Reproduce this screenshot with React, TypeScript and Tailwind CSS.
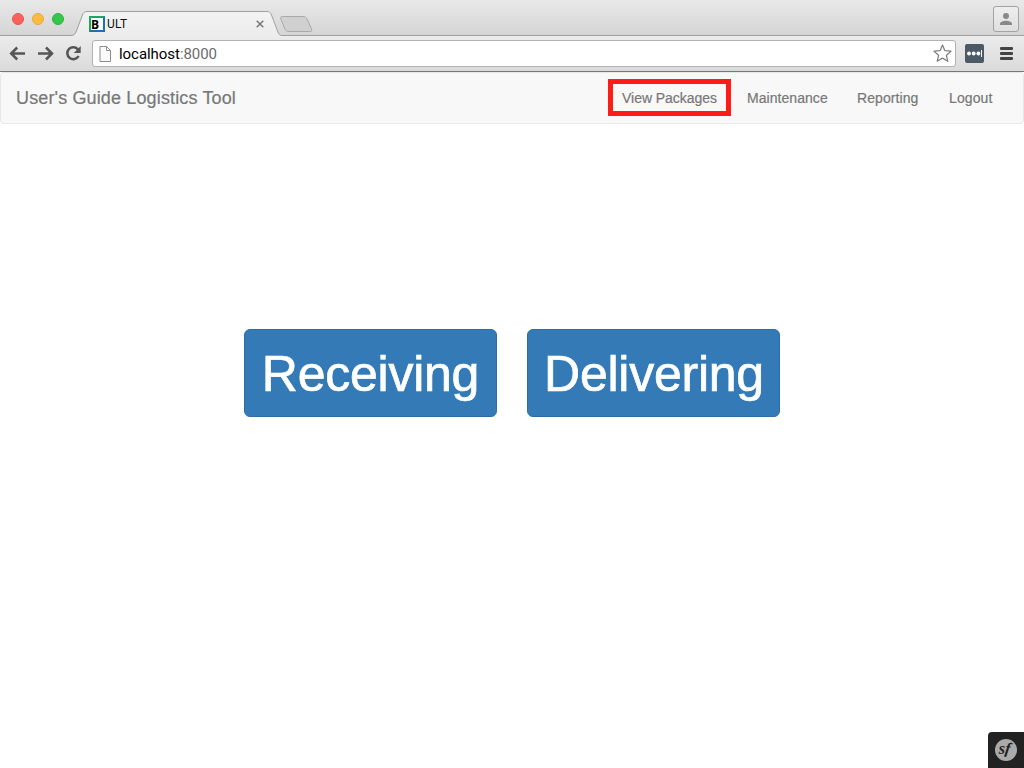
import React from "react";

function TabStrip() {
  return (
    <div className="relative flex h-9 items-start bg-gradient-to-b from-[#e9e9e9] to-[#d4d4d4]">
      <svg className="absolute inset-0" width="1024" height="37" viewBox="0 0 1024 37" fill="none">
        <defs>
          <linearGradient id="tab" x1="0" y1="11" x2="0" y2="37" gradientUnits="userSpaceOnUse">
            <stop stopColor="#f3f3f3" />
            <stop offset="1" stopColor="#ececec" />
          </linearGradient>
        </defs>
        <path d="M0 35.5H71C74 35.5 75 34 76 32L82.500 15C83.500 12.500 84.500 11.500 87 11.500H267C269.500 11.500 270.500 12.500 271.500 15L277.500 31C278.800 34 279.500 35.500 282 35.500H1024V37H0Z" fill="url(#tab)" />
        <path d="M0 35.5H71C74 35.5 75 34 76 32L82.500 15C83.500 12.500 84.500 11.500 87 11.500H267C269.500 11.500 270.500 12.500 271.500 15L277.500 31C278.800 34 279.500 35.500 282 35.500H1024" stroke="#a0a0a0" />
        <path d="M282.500 16.500H303C305 16.500 306.500 17.500 307.300 19.500L311.500 29C312.300 31 311.500 31.500 309.500 31.500H289C286.500 31.500 285.500 30.500 284.500 28L280.800 19C280 17.200 281 16.500 282.500 16.500Z" fill="#d0d0d0" stroke="#a9a9a9" />
      </svg>
      <div className="relative flex w-full items-start">
        <div className="mt-[13px] ml-3 flex gap-2">
          <span className="h-3 w-3 rounded-full border border-[#e7534f] bg-[#fc605c]" />
          <span className="h-3 w-3 rounded-full border border-[#e8a936] bg-[#fdbc40]" />
          <span className="h-3 w-3 rounded-full border border-[#29b43d] bg-[#34c84a]" />
        </div>
        <div className="mt-4 ml-[25px] flex h-4 w-4 items-end border-2 border-t-[#20a664] border-r-[#1972b9] border-b-[#1972b9] border-l-[#20a664] bg-white">
          <span className="font-['Open_Sans',sans-serif] text-[12px] leading-[11px] font-bold text-black">B</span>
        </div>
        <span className="mt-4 ml-[2px] w-[150px] font-['Roboto',sans-serif] text-[12px] leading-4 tracking-[0.2px] text-[#111]">ULT</span>
        <svg className="mt-5 -ml-[1px]" width="8" height="8" viewBox="0 0 8 8" stroke="#777" strokeWidth="1.500">
          <path d="M.7 .7L7.300 7.300M7.300 .7L.7 7.300" />
        </svg>
        <div className="mt-[6px] mr-[5px] ml-auto flex h-[26px] w-[26px] items-center justify-center rounded-[3px] border border-[#a3a3a3] bg-gradient-to-b from-[#eee] to-[#dfdfdf]">
          <svg width="14" height="14" viewBox="0 0 14 14" fill="#888">
            <circle cx="7" cy="4" r="3" />
            <path d="M1 13V11.800C1 9.800 4.500 8.800 7 8.800S13 9.800 13 11.800V13Z" />
          </svg>
        </div>
      </div>
    </div>
  );
}

function Toolbar() {
  return (
    <div className="relative flex h-9 items-center border-b border-[#777] bg-gradient-to-b from-[#ececec] to-[#dadada]">
      <svg className="ml-[9px] shrink-0" width="76" height="20" viewBox="9 44 76 20" fill="none" stroke="#555" strokeWidth="2.500">
        <path d="M25 53.500H12M17.200 47.500L11.200 53.500L17.200 59.500" />
        <path d="M38 53.500H51M46 47.500L52 53.500L46 59.500" />
        <path d="M78.100 49.500A6 6 0 1 0 78.600 56" />
        <path d="M80.700 46V52.900H73.800Z" fill="#555" stroke="none" />
      </svg>
      <div className="ml-[7px] flex h-[27px] w-[864px] items-center rounded-[3px] border border-[#b2b2b2] bg-white">
        <svg className="ml-[6px]" width="13" height="16" viewBox="0 0 13 16" fill="#fafafa" stroke="#8b8b8b">
          <path d="M1 .5H7.500L11.500 4.500V15.500H1ZM7.500 .5V4.500H11.500" />
        </svg>
        <span className="ml-[7px] font-['Roboto',sans-serif] text-[15px] leading-5 tracking-[-0.05px] text-black">
          localhost<span className="text-[#6b6b6b]">:8000</span>
        </span>
        <svg className="mr-[3px] ml-auto" width="19" height="19" viewBox="0 0 19 19" fill="white" stroke="#808080" strokeWidth="1.250" strokeLinejoin="round">
          <path d="M9.500 1L11.900 6.700L18 7.200L13.400 11.200L14.800 17.300L9.500 14.100L4.200 17.300L5.600 11.200L1 7.200L7.100 6.700Z" />
        </svg>
      </div>
      <svg className="ml-[9px]" width="19" height="19" viewBox="0 0 19 19">
        <rect width="19" height="19" rx="2" fill="#4b5a66" />
        <g fill="white"><circle cx="4" cy="9.500" r="1.900" /><circle cx="8.700" cy="9.500" r="1.900" /><circle cx="13.400" cy="9.500" r="1.900" /><path d="M16 6H17V13H16Z" /></g>
      </svg>
      <svg className="ml-[16px]" width="14" height="13" viewBox="0 0 14 13" fill="#444">
        <rect width="13" height="3" rx="1" /><rect y="5" width="13" height="3" rx="1" /><rect y="10" width="13" height="3" rx="1" />
      </svg>
    </div>
  );
}

export default function App() {
  return (
    <div className="relative flex h-[768px] w-[1024px] flex-col overflow-hidden bg-white font-['Liberation_Sans',Arial,sans-serif]">
      <TabStrip />
      <Toolbar />
      <nav className="flex h-[52px] shrink-0 items-center rounded border border-[#e7e7e7] bg-[#f8f8f8] pr-[30px] pl-[15px] text-[#777] [-webkit-text-stroke:0.2px_#777]">
        <a className="text-[18px] leading-5 tracking-[0.14px] whitespace-nowrap">User's Guide Logistics Tool</a>
        <div className="ml-auto flex items-center text-[14px] leading-5 whitespace-nowrap">
          <a className="mr-4 mb-[2px] flex h-[37px] w-[123px] items-center justify-center border-[5px] border-[#ff1c17] pt-[2px] tracking-[-0.04px]">View Packages</a>
          <a className="mr-[29px] w-[81px] tracking-[0.05px]">Maintenance</a>
          <a className="mr-[30px] w-[62px] tracking-[0.08px]">Reporting</a>
          <a className="w-[44px] tracking-[0.1px]">Logout</a>
        </div>
      </nav>
      <main className="mt-[205px] flex justify-center gap-[30px] text-[50px] leading-[66px] text-white [-webkit-text-stroke:0.7px_white]">
        <button className="flex h-[88px] w-[253px] items-center justify-center rounded-md border border-[#2e6da4] bg-[#337ab7] pt-[2px] tracking-[-0.25px]">Receiving</button>
        <button className="flex h-[88px] w-[253px] items-center justify-center rounded-md border border-[#2e6da4] bg-[#337ab7] pt-[2px] pl-px tracking-[-0.25px]">Delivering</button>
      </main>
      <div className="absolute right-0 bottom-0 flex h-9 w-9 items-center justify-center rounded-tl bg-[#222]">
        <svg width="22" height="22" viewBox="0 0 22 22">
          <circle cx="11" cy="11" r="11" fill="#aaa" />
          <g fill="#222" fontFamily="Liberation Serif, serif" fontStyle="italic" fontWeight="700">
            <text x="3.800" y="14.500" fontSize="16">s</text>
            <text x="10" y="14.300" fontSize="16" transform="rotate(8 11 11)">f</text>
          </g>
        </svg>
      </div>
    </div>
  );
}
